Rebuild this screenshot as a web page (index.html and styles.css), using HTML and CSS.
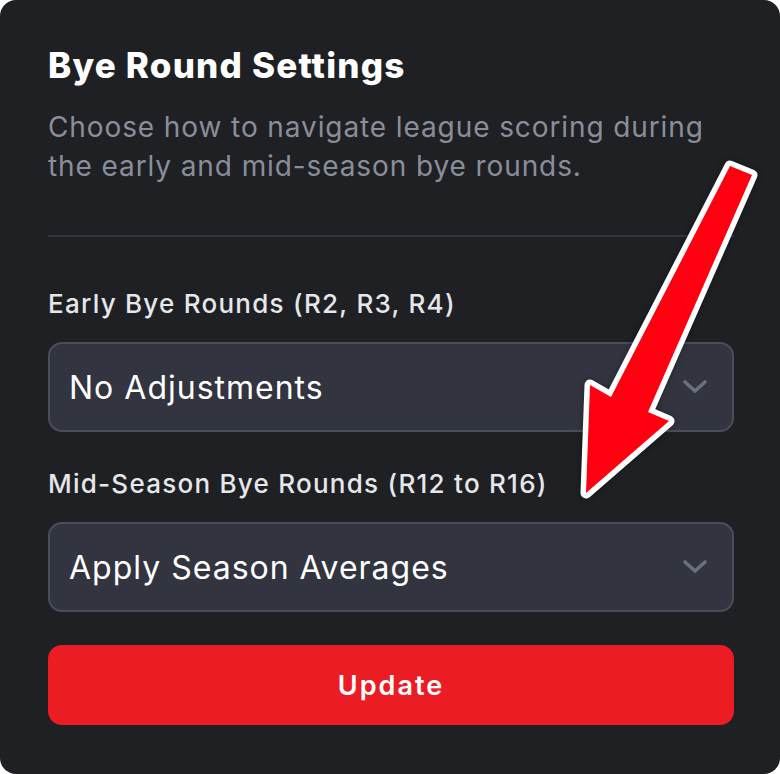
FILE: index.html
```html
<!DOCTYPE html>
<html lang="en">
<head>
    <meta charset="UTF-8">
    <meta name="viewport" content="width=device-width, initial-scale=1.0">
    <title>Bye Round Settings</title>
    <link rel="stylesheet" href="styles.css">
</head>
<body>
    <div class="card">
        <h1>Bye Round Settings</h1>
        <p class="desc">Choose how to navigate league scoring during<br>the early and mid-season bye rounds.</p>
        <hr class="divider">

        <label class="field-label" for="earlyBye">Early Bye Rounds (R2, R3, R4)</label>
        <div class="select-box" id="earlyBye">
            <span>No Adjustments</span>
            <svg class="chevron" width="26" height="16" viewBox="0 0 26 16">
                <path d="M3 3 L13 12 L23 3" fill="none" stroke="currentColor" stroke-width="3.6" stroke-linecap="round" stroke-linejoin="round"/>
            </svg>
        </div>

        <label class="field-label" for="midBye">Mid-Season Bye Rounds (R12 to R16)</label>
        <div class="select-box" id="midBye">
            <span>Apply Season Averages</span>
            <svg class="chevron" width="26" height="16" viewBox="0 0 26 16">
                <path d="M3 3 L13 12 L23 3" fill="none" stroke="currentColor" stroke-width="3.6" stroke-linecap="round" stroke-linejoin="round"/>
            </svg>
        </div>

        <button class="update-btn">Update</button>

        <svg class="arrow" width="780" height="774" viewBox="0 0 780 774">
            <polygon points="730,166 752,175 648,412 669,421 586,493 590,385 611,397"
                     fill="#ff0010" stroke="#ffffff" stroke-width="11" stroke-linejoin="round" paint-order="stroke"/>
        </svg>
    </div>
</body>
</html>
```

FILE: styles.css
```css
body {
    margin: 0;
    background: #ffffff;
    font-family: "Inter", "Noto Sans", sans-serif;
}

.card {
    position: relative;
    width: 780px;
    height: 774px;
    box-sizing: border-box;
    padding: 45px 46px 0 48px;
    background: #1e2024;
    border-radius: 16px;
    overflow: hidden;
}

h1 {
    margin: 0;
    font-size: 35px;
    line-height: 40px;
    font-weight: 800;
    letter-spacing: 1.2px;
    color: #ffffff;
}

.desc {
    margin: 23px 0 0;
    font-size: 28px;
    line-height: 39px;
    letter-spacing: 0.9px;
    color: #8a8e99;
}

.divider {
    margin: 49px 0 0;
    border: none;
    height: 2px;
    background: #34363f;
}

.field-label {
    display: block;
    margin-top: 49px;
    font-size: 26px;
    line-height: 36px;
    font-weight: 500;
    letter-spacing: 1.25px;
    color: #e6e7ea;
}

.select-box {
    margin-top: 20px;
    height: 90px;
    box-sizing: border-box;
    display: flex;
    align-items: center;
    justify-content: space-between;
    padding: 0 24px 0 19px;
    background: #32343f;
    border: 2px solid #4a4d5a;
    border-radius: 14px;
    font-size: 32px;
    letter-spacing: 1px;
    color: #ffffff;
}

.select-box + .field-label {
    margin-top: 34px;
}

.chevron {
    color: #6b6f7e;
}

.update-btn {
    display: block;
    width: 100%;
    height: 80px;
    margin-top: 33px;
    border: none;
    border-radius: 14px;
    background: #ec1c24;
    color: #ffffff;
    font-family: inherit;
    font-size: 27px;
    font-weight: 600;
    letter-spacing: 2px;
}

.arrow {
    position: absolute;
    left: 0;
    top: 0;
    filter: drop-shadow(0 0 3px rgba(0, 0, 0, 0.35));
}
```
